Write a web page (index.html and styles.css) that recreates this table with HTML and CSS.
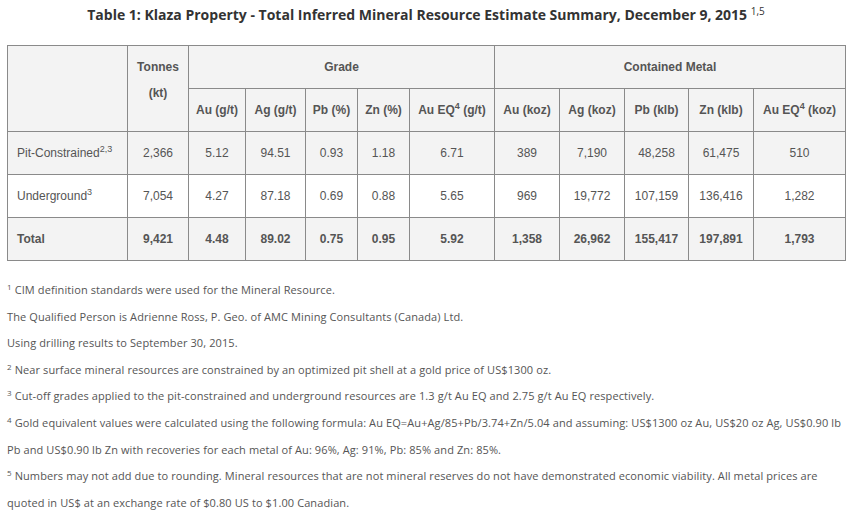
FILE: index.html
```html
<!DOCTYPE html>
<html>
<head>
<meta charset="utf-8">
<link rel="stylesheet" href="styles.css">
</head>
<body>
<div class="page">
  <h3 class="title">Table 1: Klaza Property - Total Inferred Mineral Resource Estimate Summary, December 9, 2015 <sup>1,5</sup></h3>
  <table class="res">
    <colgroup>
      <col style="width:120px"><col style="width:61px"><col style="width:57px"><col style="width:60px"><col style="width:52px"><col style="width:52px"><col style="width:85px"><col style="width:65px"><col style="width:65px"><col style="width:64px"><col style="width:65px"><col style="width:92px">
    </colgroup>
    <thead>
      <tr class="grey">
        <th rowspan="2"></th>
        <th rowspan="2">Tonnes<br>(kt)</th>
        <th colspan="5">Grade</th>
        <th colspan="5">Contained Metal</th>
      </tr>
      <tr class="grey">
        <th>Au (g/t)</th><th>Ag (g/t)</th><th>Pb (%)</th><th>Zn (%)</th><th>Au EQ<sup>4</sup> (g/t)</th>
        <th>Au (koz)</th><th>Ag (koz)</th><th>Pb (klb)</th><th>Zn (klb)</th><th>Au EQ<sup>4</sup> (koz)</th>
      </tr>
    </thead>
    <tbody>
      <tr class="grey">
        <td class="label">Pit-Constrained<sup>2,3</sup></td>
        <td>2,366</td><td>5.12</td><td>94.51</td><td>0.93</td><td>1.18</td><td>6.71</td><td>389</td><td>7,190</td><td>48,258</td><td>61,475</td><td>510</td>
      </tr>
      <tr>
        <td class="label">Underground<sup>3</sup></td>
        <td>7,054</td><td>4.27</td><td>87.18</td><td>0.69</td><td>0.88</td><td>5.65</td><td>969</td><td>19,772</td><td>107,159</td><td>136,416</td><td>1,282</td>
      </tr>
      <tr class="grey total">
        <td class="label">Total</td>
        <td>9,421</td><td>4.48</td><td>89.02</td><td>0.75</td><td>0.95</td><td>5.92</td><td>1,358</td><td>26,962</td><td>155,417</td><td>197,891</td><td>1,793</td>
      </tr>
    </tbody>
  </table>
  <div class="notes">
    <p><sup>1</sup> CIM definition standards were used for the Mineral Resource.</p>
    <p>The Qualified Person is Adrienne Ross, P. Geo. of AMC Mining Consultants (Canada) Ltd.</p>
    <p>Using drilling results to September 30, 2015.</p>
    <p><sup>2</sup> Near surface mineral resources are constrained by an optimized pit shell at a gold price of US$1300 oz.</p>
    <p><sup>3</sup> Cut-off grades applied to the pit-constrained and underground resources are 1.3 g/t Au EQ and 2.75 g/t Au EQ respectively.</p>
    <p><sup>4</sup> Gold equivalent values were calculated using the following formula: Au EQ=Au+Ag/85+Pb/3.74+Zn/5.04 and assuming: US$1300 oz Au, US$20 oz Ag, US$0.90 lb Pb and US$0.90 lb Zn with recoveries for each metal of Au: 96%, Ag: 91%, Pb: 85% and Zn: 85%.</p>
    <p><sup>5</sup> Numbers may not add due to rounding. Mineral resources that are not mineral reserves do not have demonstrated economic viability. All metal prices are quoted in US$ at an exchange rate of $0.80 US to $1.00 Canadian.</p>
  </div>
</div>
</body>
</html>
```
FILE: styles.css
```css
html, body {
  margin: 0;
  padding: 0;
  background: #fff;
}
.page {
  padding: 0 7px;
  font-family: "Open Sans", sans-serif;
  color: #555;
}
.title {
  margin: 0;
  padding-top: 5px;
  height: 40px;
  text-align: center;
  font-size: 14px;
  font-weight: 700;
  color: #333;
  line-height: 20px;
}
.title sup {
  font-size: 10px;
  font-weight: 400;
  vertical-align: 5px;
  line-height: 0;
}
.res {
  border-collapse: collapse;
  table-layout: fixed;
  width: 838px;
  border: 1px solid #333;
  font-family: "Liberation Sans", Arial, sans-serif;
  font-size: 12px;
  color: #555;
}
.res th, .res td {
  border: 1px solid #8a8a8a;
  padding: 8px 2px;
  line-height: 26px;
  vertical-align: top;
  text-align: center;
}
.res th {
  font-weight: 700;
}
.res td.label {
  text-align: left;
  padding-left: 9px;
}
.res sup {
  font-size: 9px;
  line-height: 0;
  vertical-align: 5px;
}
.grey {
  background: #f3f3f3;
}
.total td {
  font-weight: 700;
}
.notes {
  padding-top: 16px;
  font-size: 11px;
  letter-spacing: 0.1px;
  color: #555;
}
.notes p {
  margin: 0;
  line-height: 26.6px;
}
.notes sup {
  font-size: 8px;
  line-height: 0;
  vertical-align: 4px;
}
```
